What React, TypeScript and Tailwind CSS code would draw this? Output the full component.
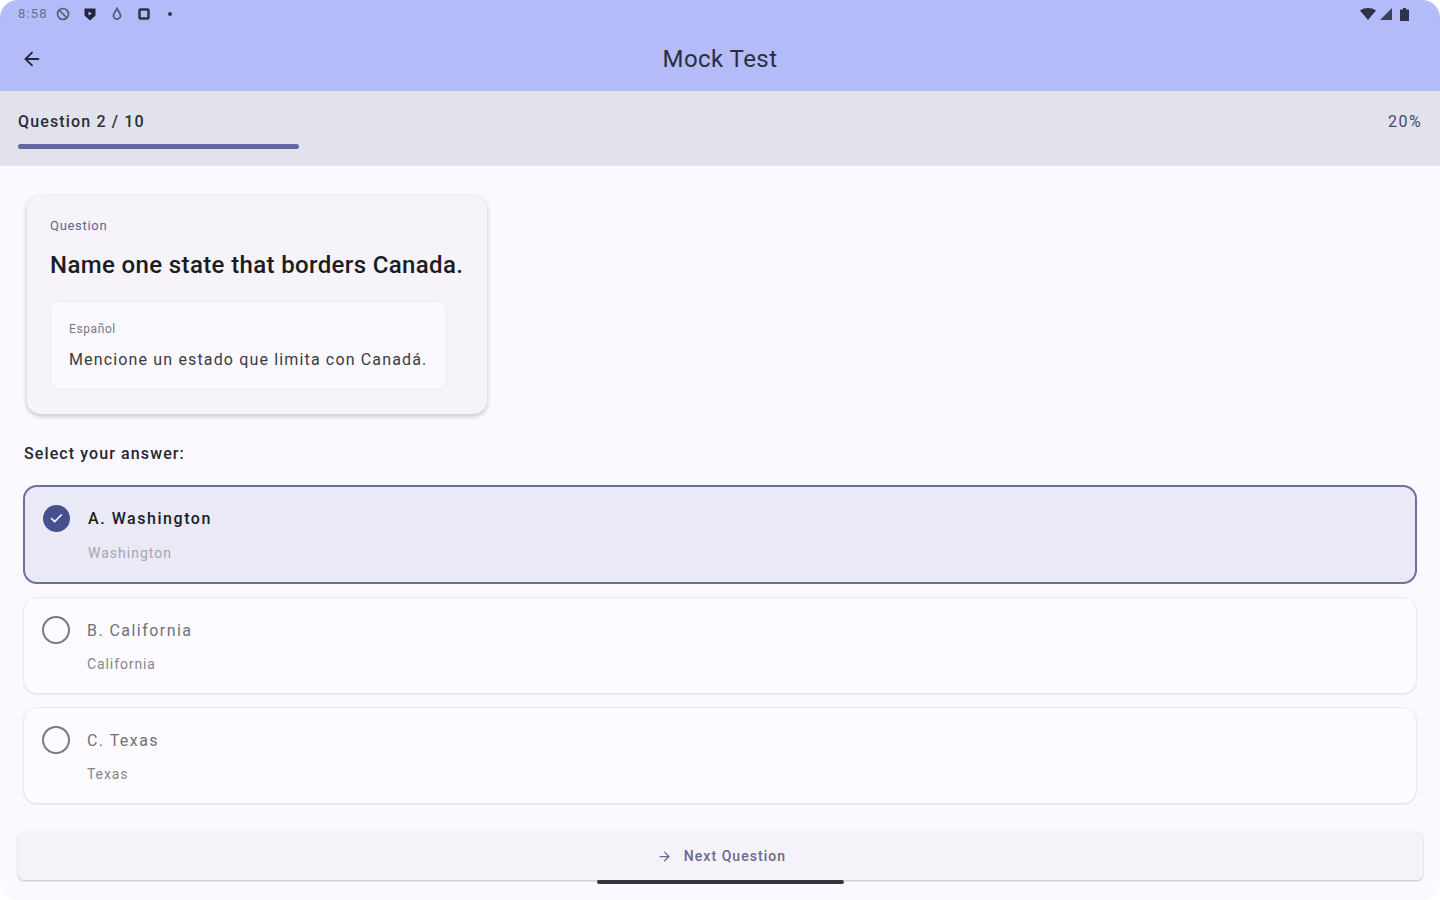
import { ArrowLeft, ArrowRight, Check } from "lucide-react";

type Option = {
  label: string;
  sub: string;
  selected?: boolean;
};

const options: Option[] = [
  { label: "A. Washington", sub: "Washington", selected: true },
  { label: "B. California", sub: "California" },
  { label: "C. Texas", sub: "Texas" },
];

function StatusBar() {
  return (
    <div className="flex h-[28px] items-center justify-between pl-[18px] pr-[31px] text-[#44465a]">
      <div className="flex items-center">
        <span className="w-[30px] text-[13px] tracking-[1.2px] text-[#6b6f8c]">8:58</span>
        <svg width="16" height="16" viewBox="0 0 16 16" className="ml-[7px]" fill="none" stroke="#555a74" strokeWidth="1.6">
          <circle cx="8" cy="8" r="5.5" />
          <path d="M4 4l8 8" />
        </svg>
        <svg width="16" height="16" viewBox="0 0 16 16" className="ml-[11px]" fill="#23263a">
          <path d="M2.500 2.500h11v7L8 14.500l-5.500-5z" />
          <path d="M6.500 5.500l3.500 2-3.500 2z" fill="#b3bcf8" />
        </svg>
        <svg width="12" height="14" viewBox="0 0 12 14" className="ml-[13px]" fill="none" stroke="#555a74" strokeWidth="1.800">
          <path d="M6 1.500C7 4 9.500 6 9.500 8.500a3.500 3.500 0 0 1-7 0C2.500 6 5 4 6 1.500z" />
        </svg>
        <svg width="14" height="14" viewBox="0 0 14 14" className="ml-[14px]" fill="none" stroke="#2f3248" strokeWidth="2.500">
          <rect x="2.500" y="2.500" width="9" height="9" rx="1" />
        </svg>
        <span className="ml-[17px] h-[4px] w-[4px] rounded-full bg-[#34374d]" />
      </div>
      <div className="flex items-center">
        <svg width="16" height="12" viewBox="0 0 16 12" fill="#2f3248">
          <path d="M0 2.500C4.500-.8 11.500-.8 16 2.500L8 12z" />
        </svg>
        <svg width="12" height="12" viewBox="0 0 12 12" className="ml-[4px]" fill="#3d4058">
          <path d="M12 0v12H0z" />
        </svg>
        <svg width="9" height="13" viewBox="0 0 9 13" className="ml-[8px]" fill="#2f3248">
          <path d="M3 0h3v1.500h3V13H0V1.500h3z" />
        </svg>
      </div>
    </div>
  );
}

function OptionCard({ option }: { option: Option }) {
  if (option.selected) {
    return (
      <div className="flex h-[99px] rounded-[14px] border-2 border-[#6a7298] bg-[#e9eaf5] pl-[18px] pt-[18px]">
        <div className="flex h-[27px] w-[27px] items-center justify-center rounded-full bg-[#46508f]">
          <Check size={15} strokeWidth={2.500} className="text-white" />
        </div>
        <div className="ml-[18px] flex flex-col">
          <span className="text-[16px] font-medium leading-[28px] tracking-[1.55px] text-[#1b1c26]">{option.label}</span>
          <span className="mt-[10px] text-[14px] leading-[20px] tracking-[1px] text-[#a5a6b0]">{option.sub}</span>
        </div>
      </div>
    );
  }
  return (
    <div className="flex h-[97px] rounded-[14px] border border-[#e8e7ef] bg-[#fdfbff] pl-[18px] pt-[18px] shadow-[0_1px_1px_rgba(70,70,90,0.08)]">
      <div className="h-[28px] w-[28px] rounded-full border-2 border-[#777984]" />
      <div className="ml-[17px] flex flex-col">
        <span className="mt-[1px] text-[16px] leading-[28px] tracking-[1.45px] text-[#6f7079]">{option.label}</span>
        <span className="mt-[9px] text-[14px] leading-[20px] tracking-[0.9px] text-[#85868f]">{option.sub}</span>
      </div>
    </div>
  );
}

export default function App() {
  return (
    <div className="h-[900px] w-full overflow-hidden bg-white font-['Roboto',sans-serif]">
      <div className="relative flex h-[900px] flex-col overflow-hidden rounded-[18px] bg-[#fbf8ff]">
        <header className="h-[91px] bg-[#b3bcf8]">
          <StatusBar />
          <div className="relative flex h-[62px] items-center justify-center">
            <ArrowLeft size={22} strokeWidth={2} className="absolute left-[21px] top-[20px] text-[#23263a]" />
            <span className="text-[24px] leading-[32px] tracking-[0.45px] text-[#2c2e40]">Mock Test</span>
          </div>
        </header>

        <div className="h-[75px] bg-[#e2e2ec] pl-[18px] pr-[18px] pt-[21px]">
          <div className="flex items-center justify-between">
            <span className="text-[16px] font-medium leading-[20px] tracking-[1.15px] text-[#2b2c38]">Question 2 / 10</span>
            <span className="text-[16px] leading-[20px] tracking-[1.4px] text-[#444a6a]">20%</span>
          </div>
          <div className="mt-[12px] h-[5px] w-[281px] rounded-full bg-[#62689f]" />
        </div>

        <main className="flex-1 px-[23px] pt-[30px]">
          <section className="ml-[4px] h-[218px] w-[460px] rounded-[14px] bg-[#f6f3fa] pl-[23px] pt-[21px] shadow-[0_2px_5px_rgba(60,60,80,0.3)]">
            <p className="text-[13px] leading-[18px] tracking-[0.7px] text-[#5c6298]">Question</p>
            <h2 className="mt-[14px] whitespace-nowrap text-[24px] font-medium leading-[32px] tracking-[0.37px] text-[#1b1c22]">
              Name one state that borders Canada.
            </h2>
            <div className="mt-[20px] h-[89px] w-[397px] rounded-[10px] border border-[#f0eef4] bg-[#fbf8ff] pl-[18px] pt-[19px]">
              <p className="text-[12px] leading-[16px] tracking-[0.6px] text-[#777883]">Español</p>
              <p className="mt-[11px] whitespace-nowrap text-[16px] leading-[24px] tracking-[1.15px] text-[#3a3b45]">
                Mencione un estado que limita con Canadá.
              </p>
            </div>
          </section>

          <p className="mt-[30px] pl-[1px] text-[16px] font-medium leading-[20px] tracking-[1.1px] text-[#25262e]">Select your answer:</p>

          <div className="mt-[21px] flex w-[1394px] flex-col gap-[13px]">
            {options.map((o) => (
              <OptionCard key={o.label} option={o} />
            ))}
          </div>

          <button className="-ml-[5px] mt-[28px] flex h-[48px] w-[1405px] items-center justify-center rounded-[6px] bg-[#f5f2f9] pl-[2px] shadow-[0_1px_2px_rgba(60,60,80,0.3)]">
            <ArrowRight size={15} strokeWidth={2} className="text-[#666a92]" />
            <span className="ml-[12px] text-[14px] font-medium tracking-[1.05px] text-[#666a92]">Next Question</span>
          </button>
        </main>

        <div className="absolute left-[597px] top-[880px] h-[4px] w-[247px] rounded-full bg-[#33343d]" />
      </div>
    </div>
  );
}
